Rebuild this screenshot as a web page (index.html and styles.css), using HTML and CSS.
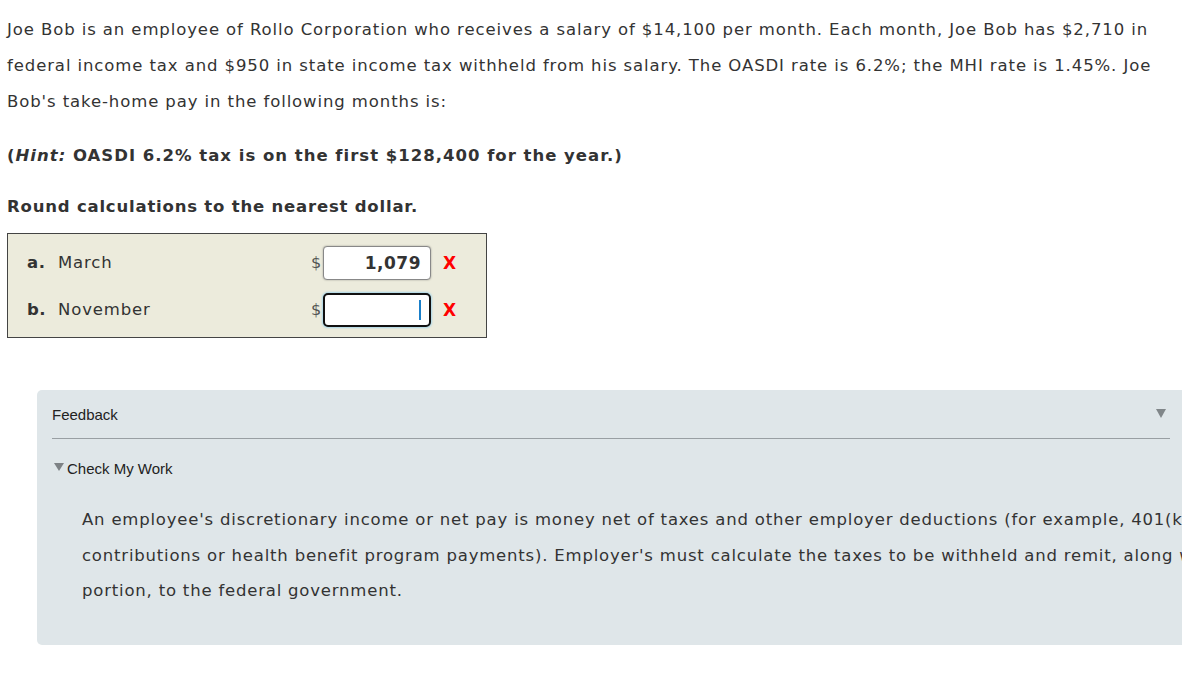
FILE: index.html
```html
<!DOCTYPE html>
<html>
<head>
<meta charset="utf-8">
<link rel="stylesheet" href="styles.css">
</head>
<body>
<div class="page">
  <p class="intro">Joe Bob is an employee of Rollo Corporation who receives a salary of $14,100 per month. Each month, Joe Bob has $2,710 in<br>federal income tax and $950 in state income tax withheld from his salary. The OASDI rate is 6.2%; the MHI rate is 1.45%. Joe<br>Bob's take-home pay in the following months is:</p>
  <p class="bold hint">(<em>Hint:</em> OASDI 6.2% tax is on the first $128,400 for the year.)</p>
  <p class="bold round">Round calculations to the nearest dollar.</p>
  <div class="answers">
    <div class="row">
      <span class="letter">a.</span><span class="label">March</span>
      <span class="dollar">$</span>
      <div class="input filled">1,079</div>
      <span class="wrong">X</span>
    </div>
    <div class="row">
      <span class="letter">b.</span><span class="label">November</span>
      <span class="dollar">$</span>
      <div class="input focused"><span class="caret"></span></div>
      <span class="wrong">X</span>
    </div>
  </div>
  <div class="feedback">
    <div class="fb-head">
      <span>Feedback</span>
      <span class="tri tri-right"></span>
    </div>
    <div class="cmw"><span class="tri tri-small"></span>Check My Work</div>
    <p class="fb-text">An employee's discretionary income or net pay is money net of taxes and other employer deductions (for example, 401(k)<br>contributions or health benefit program payments). Employer's must calculate the taxes to be withheld and remit, along with the employer's<br>portion, to the federal government.</p>
  </div>
</div>
</body>
</html>
```
FILE: styles.css
```css
html, body {
  margin: 0;
  padding: 0;
  overflow: hidden;
  background: #fff;
}
.page {
  width: 1600px;
  padding: 12px 0 0 7px;
  font-family: "DejaVu Sans", Verdana, sans-serif;
  font-size: 16.5px;
  color: #333;
}
p { margin: 0; }
.intro {
  white-space: nowrap;
  line-height: 36px;
  letter-spacing: 0.9px;
}
.bold {
  font-weight: bold;
  line-height: 36px;
}
.hint {
  margin-top: 18px;
  letter-spacing: 1px;
}
.round {
  margin-top: 15px;
  letter-spacing: 0.8px;
}
.bold em { font-style: italic; }
.answers {
  margin-top: 8px;
  width: 478px;
  height: 103px;
  background: #ecebdc;
  border: 1px solid #444;
}
.row {
  display: flex;
  align-items: center;
  height: 47px;
  padding-left: 19px;
}
.row:first-child { margin-top: 5px; }
.letter {
  font-weight: bold;
  width: 31px;
  letter-spacing: 0.5px;
}
.label {
  width: 253px;
  letter-spacing: 0.85px;
}
.dollar {
  width: 12px;
  color: #555;
  font-size: 16px;
}
.input {
  box-sizing: border-box;
  width: 108px;
  height: 34px;
  background: #fff;
  border: 1px solid #888;
  border-radius: 4px;
  display: flex;
  align-items: center;
  justify-content: flex-end;
  padding-right: 9px;
  font-weight: bold;
  font-size: 17px;
  letter-spacing: 0.5px;
  box-shadow: 0 0 2px rgba(0,0,0,0.35);
}
.input.focused {
  border: 2px solid #111;
  border-radius: 5px;
  box-shadow: 0 0 2px 1px #a7d6e8;
  padding-right: 8px;
}
.caret {
  width: 2px;
  height: 20px;
  background: #1a7fc9;
}
.wrong {
  margin-left: 12px;
  color: #f00;
  font-weight: bold;
  font-size: 17px;
}
.feedback {
  margin-top: 52px;
  margin-left: 30px;
  width: 1200px;
  height: 255px;
  background: #dfe6e9;
  border-radius: 5px;
  padding: 0 0 0 15px;
  box-sizing: border-box;
  font-family: "Liberation Sans", Arial, sans-serif;
}
.fb-head {
  width: 1118px;
  height: 48px;
  border-bottom: 1px solid #999fa3;
  display: flex;
  justify-content: space-between;
  align-items: center;
  font-size: 15px;
  color: #222;
}
.tri {
  display: inline-block;
  width: 0;
  height: 0;
  border-left: 5px solid transparent;
  border-right: 5px solid transparent;
  border-top: 9px solid #808689;
}
.tri-right {
  margin-right: 4px;
  margin-top: -2px;
}
.cmw {
  margin-top: 21px;
  font-size: 15px;
  color: #222;
  display: flex;
  align-items: center;
  padding-left: 2px;
}
.tri-small {
  border-top-width: 8px;
  border-top-color: #7d8285;
  margin-right: 3px;
  margin-top: -3px;
}
.fb-text {
  margin-top: 25px;
  padding-left: 30px;
  white-space: nowrap;
  font-family: "DejaVu Sans", Verdana, sans-serif;
  font-size: 16.5px;
  line-height: 35.5px;
  color: #333;
  letter-spacing: 0.8px;
}
```
